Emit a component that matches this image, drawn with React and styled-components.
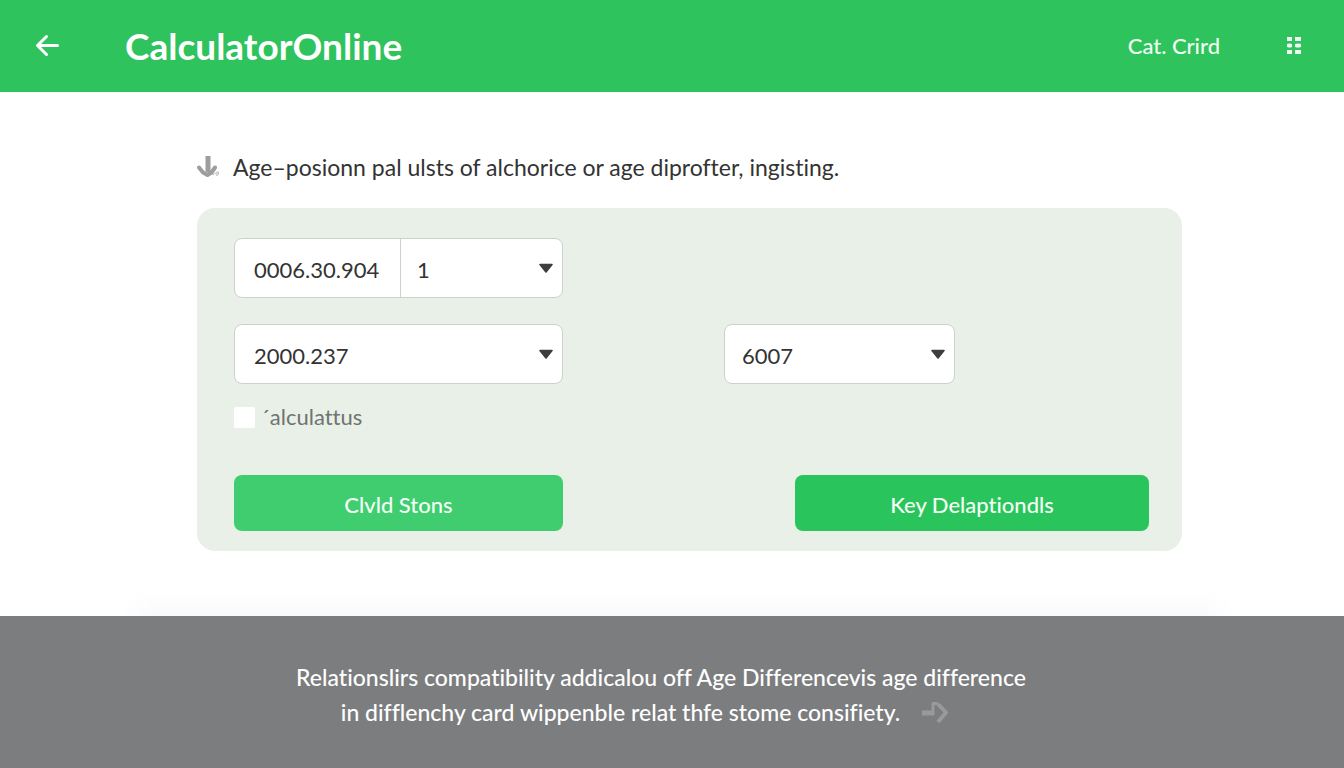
import React from 'react';
import styled, { createGlobalStyle } from 'styled-components';

const GlobalStyle = createGlobalStyle`
  *, *::before, *::after { box-sizing: border-box; }
  body {
    margin: 0;
    background: #fff;
    color: #333;
    font-family: Lato, "Open Sans", sans-serif;
    font-variant-ligatures: none;
  }
  button, input, select { font: inherit; font-variant-ligatures: none; color: inherit; margin: 0; }
`;

const Page = styled.div`
  min-height: 100vh;
  display: flex;
  flex-direction: column;
`;

const Header = styled.header`
  display: flex;
  align-items: center;
  height: 92px;
  padding: 0 40px 0 34px;
  background: #2ec35d;
  color: #fff;
`;

const IconButton = styled.button`
  display: flex;
  padding: 0;
  border: 0;
  background: none;
  color: #fff;
  cursor: pointer;
`;

const Brand = styled.a`
  margin-left: 65px;
  margin-right: auto;
  font-size: 37px;
  line-height: 48px;
  font-weight: 700;
  color: #fff;
  text-decoration: none;
`;

const HeaderLink = styled.a`
  margin-right: 66px;
  font-size: 22px;
  line-height: 28px;
  font-weight: 500;
  color: #effff2;
  text-decoration: none;
`;

const Main = styled.main`
  padding: 60px 162px 0 197px;
`;

const Intro = styled.h1`
  display: flex;
  align-items: center;
  gap: 12px;
  margin: 0 0 26px;
  font-size: 23px;
  line-height: 30px;
  font-weight: 400;
`;

const Card = styled.form`
  display: grid;
  grid-template-columns: 329fr 161fr 71fr 160fr 194fr;
  padding: 30px 33px 20px 37px;
  border-radius: 18px;
  background: #e9f0e7;
`;

const Field = styled.div`
  display: flex;
  grid-column: ${(p) => p.$column};
  height: 60px;
  margin-bottom: 26px;
  border: 1px solid #cbd2cc;
  border-radius: 8px;
  background: #fff;
  overflow: hidden;
  font-size: 22px;
`;

const LastField = styled(Field)`
  margin-bottom: 21px;
`;

const TextInput = styled.input`
  width: 166px;
  padding: 3px 0 0 19px;
  border: 0;
  border-right: 1px solid #cbd2cc;
  background: none;
  outline: none;
`;

const SelectBox = styled.div`
  position: relative;
  flex: 1;
  display: flex;
`;

const Select = styled.select`
  flex: 1;
  appearance: none;
  padding: 3px 36px 0 ${(p) => p.$inset}px;
  border: 0;
  background: none;
  outline: none;
`;

const Caret = styled.svg`
  position: absolute;
  right: 8px;
  top: 24px;
  pointer-events: none;
`;

const CheckLabel = styled.label`
  grid-column: 1 / -1;
  display: flex;
  align-items: center;
  gap: 6px;
  margin-bottom: 46px;
  font-size: 22px;
  line-height: 24px;
  color: #6f746f;
`;

const Checkbox = styled.input`
  appearance: none;
  width: 21px;
  height: 21px;
  border-radius: 2px;
  background: #fff;
`;

const Action = styled.button`
  grid-column: ${(p) => p.$column};
  height: 56px;
  padding: 2px 0 0;
  border: 0;
  border-radius: 8px;
  background: ${(p) => (p.$strong ? '#29c45b' : '#3fcd70')};
  color: #f2fff5;
  font-size: 22px;
  font-weight: 500;
  cursor: pointer;
`;

const FadeEdge = styled.div`
  height: 24px;
  margin: 41px 8% 0 9%;
  background:
    linear-gradient(90deg, #fff, transparent 3%, transparent 97%, #fff),
    linear-gradient(#fff, #fafafa);
`;

const Footer = styled.footer`
  flex: 1;
  padding: 44px 24px 36px;
  background: #7c7d7e;
  color: #fff;
`;

const FooterText = styled.p`
  margin: 0;
  font-size: 23px;
  line-height: 35px;
  font-weight: 500;
  text-align: center;
`;

const FooterLine = styled.span`
  display: flex;
  align-items: center;
  justify-content: center;
  gap: 21px;
  padding-right: ${(p) => (p.$withIcon ? 54 : 22)}px;
`;

function Dropdown({ label, value, inset = 19 }) {
  return (
    <SelectBox>
      <Select aria-label={label} defaultValue={value} $inset={inset}>
        <option>{value}</option>
      </Select>
      <Caret width="16" height="11" viewBox="0 0 16 11" aria-hidden="true">
        <path d="M2 1.500h12L8 9z" fill="#3c3f3e" stroke="#3c3f3e" strokeWidth="1.6" strokeLinejoin="round" />
      </Caret>
    </SelectBox>
  );
}

export default function App() {
  return (
    <Page>
      <GlobalStyle />
      <Header>
        <IconButton aria-label="Back">
          <svg width="26" height="24" viewBox="0 0 26 24" fill="none" stroke="currentColor" strokeWidth="3" strokeLinecap="round" strokeLinejoin="round">
            <path d="M23.5 11.500H4M12.5 2.500 3.5 11.500l9 9" />
          </svg>
        </IconButton>
        <Brand href="#">CalculatorOnline</Brand>
        <HeaderLink href="#">Cat. Crird</HeaderLink>
        <IconButton aria-label="Menu">
          <svg width="18" height="18" viewBox="0 0 18 18" fill="#effff2">
            <path d="M1 0h5v4H1zM9 0h6v4H9zM1 7q2.500-1 5 0v3q-2.500 1-5 0zM9 7q3-1 6 0v3q-3 1-6 0zM1 13h5v4H1zM9 13h6v4H9z" />
          </svg>
        </IconButton>
      </Header>
      <Main>
        <Intro>
          <svg width="24" height="24" viewBox="0 0 24 24" fill="none" aria-hidden="true">
            <path d="M11 1v16" stroke="#9b9d9e" strokeWidth="5" />
            <path d="M2 12.500l4 5 4.500 2.500 4-2.500 3.500-5" stroke="#9b9d9e" strokeWidth="4" strokeLinejoin="round" strokeLinecap="round" />
            <path d="M15.500 20l2-1.500M19 20.500q3-1 2.500-3.500-2.500 0-3 2" stroke="#c0c2c3" strokeWidth="1.200" />
          </svg>
          Age–posionn pal ulsts of alchorice or age diprofter, ingisting.
        </Intro>
        <Card onSubmit={(e) => e.preventDefault()}>
          <Field $column="1">
            <TextInput aria-label="Date" defaultValue="0006.30.904" />
            <Dropdown label="Count" value="1" inset={16} />
          </Field>
          <LastField $column="1">
            <Dropdown label="Year" value="2000.237" />
          </LastField>
          <LastField $column="3 / 5">
            <Dropdown label="Second year" value="6007" inset={17} />
          </LastField>
          <CheckLabel>
            <Checkbox type="checkbox" />
            ´alculattus
          </CheckLabel>
          <Action type="button" $column="1">Clvld Stons</Action>
          <Action type="submit" $column="4 / 6" $strong>Key Delaptiondls</Action>
        </Card>
      </Main>
      <FadeEdge />
      <Footer>
        <FooterText>
          <FooterLine>Relationslirs compatibility addicalou off Age Differencevis age difference</FooterLine>
          <FooterLine $withIcon>
            in difflenchy card wippenble relat thfe stome consifiety.
            <svg width="28" height="26" viewBox="0 0 28 26" fill="none" aria-hidden="true">
              <path d="M1 13h12" stroke="#999a9b" strokeWidth="5" />
              <path d="M12 15V3.500h5" stroke="#999a9b" strokeWidth="3" strokeLinejoin="round" />
              <path d="M17 4l8 8.500-8 9.500" stroke="#999a9b" strokeWidth="4" strokeLinejoin="round" />
            </svg>
          </FooterLine>
        </FooterText>
      </Footer>
    </Page>
  );
}
